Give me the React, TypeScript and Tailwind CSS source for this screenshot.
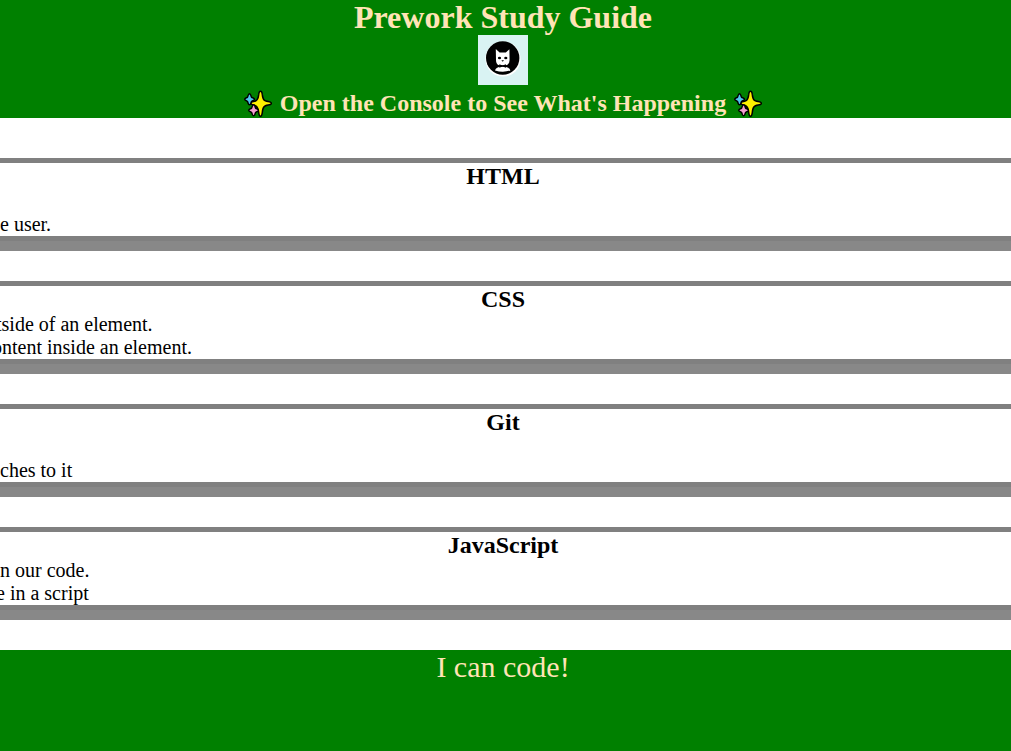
import React from "react";

function Sparkles() {
  return (
    <svg viewBox="0 0 28 28" className="size-7 shrink-0" aria-hidden="true" stroke="#000" strokeWidth="3" strokeLinejoin="round" paintOrder="stroke">
      <path fill="#fff100" d="M16.5 2C17 2 17.4 3 17.6 5C18.2 9.8 19.4 11.6 24 12.3C26 12.6 26.6 12.8 26.6 13.3C26.6 13.8 26 14 24 14.3C19.4 15 18.2 17.2 17.6 22C17.4 24 17 25.4 16.5 25.4C16 25.4 15.6 24 15.4 22C14.8 17.2 13.4 15 9.6 14.3C8 14 7.6 13.8 7.6 13.3C7.6 12.8 8 12.6 9.6 12.3C13.4 11.6 14.8 9.8 15.4 5C15.6 3 16 2 16.5 2Z" />
      <path fill="#50c8f0" d="M5.5 4.6C6.2 4.6 6.3 7 7 7.7C7.6 8.4 9.7 8.6 9.7 9.3C9.7 10 7.6 10.2 7 10.9C6.3 11.6 6.2 14 5.5 14C4.8 14 4.7 11.6 4 10.9C3.4 10.2 1.5 10 1.5 9.3C1.5 8.6 3.4 8.4 4 7.7C4.7 7 4.8 4.6 5.5 4.6Z" />
      <path fill="#f4a0d0" d="M9.6 15.6C10.3 15.6 10.4 18 11.1 18.7C11.7 19.4 13.7 19.6 13.7 20.3C13.7 21 11.7 21.2 11.1 21.9C10.4 22.6 10.3 24.9 9.6 24.9C8.9 24.9 8.8 22.6 8.1 21.9C7.5 21.2 5.5 21 5.5 20.3C5.5 19.6 7.5 19.4 8.1 18.7C8.8 18 8.9 15.6 9.6 15.6Z" />
    </svg>
  );
}

function CatLogo() {
  return (
    <svg viewBox="0 0 50 50" className="size-[50px]" role="img" aria-label="Cat logo">
      <rect width="50" height="50" fill="#d9f3f3" />
      <circle cx="25" cy="24" r="17.6" fill="#fff" />
      <circle cx="24.7" cy="23" r="16.7" fill="#000" />
      <path fill="#fff" d="M17.8 14L21.6 17.4H27.8L31.4 14.2L31.6 25Q31.4 29.6 28 30.2H21.2Q18 29.6 18 25Z" />
      <path fill="#fff" d="M17 35.4Q18 32.4 22 31.8H27.4Q31.4 32.4 32.4 35.4Q25 38 17 35.4Z" />
      <ellipse cx="21.5" cy="23" rx="1.6" ry="1.2" />
      <ellipse cx="27.8" cy="23" rx="1.6" ry="1.2" />
      <path d="M23.4 25.2H26L24.7 26.8Z" />
      <path d="M21.3 29.2L24.6 30.5L28 29.2V32.7L24.6 31.4L21.3 32.7Z" />
    </svg>
  );
}

const topics = [
  { title: "HTML", notes: [{ text: "", shift: "" }, { text: "e user.", shift: "" }] },
  {
    title: "CSS",
    notes: [
      { text: "tside of an element.", shift: "-ml-1" },
      { text: "ontent inside an element.", shift: "-ml-2" },
    ],
  },
  { title: "Git", notes: [{ text: "", shift: "" }, { text: "ches to it", shift: "" }] },
  {
    title: "JavaScript",
    notes: [
      { text: "n our code.", shift: "" },
      { text: "e in a script", shift: "-ml-1" },
    ],
  },
];

export default function App() {
  return (
    <div className="flex min-h-screen flex-col overflow-x-hidden bg-white font-['Liberation_Serif',serif] text-black">
      <header className="flex flex-col items-center bg-[#008000] pr-[5px] text-center text-[#ffe4b5]">
        <h1 className="text-[32px] leading-[35px] font-bold">Prework Study Guide</h1>
        <CatLogo />
        <h2 className="mt-1 flex items-center gap-2 text-2xl leading-[29px] font-bold">
          <Sparkles />
          Open the Console to See What's Happening
          <Sparkles />
        </h2>
      </header>
      <main className="flex flex-col gap-10 py-10">
        {topics.map((topic) => (
          <section key={topic.title} className="border-y-5 border-[#808080] shadow-[0_10px_0_#888888]">
            <h2 className="pr-[5px] text-center text-2xl leading-[27px] font-bold">{topic.title}</h2>
            <ul className="text-xl leading-[23px]">
              {topic.notes.map((note, i) => (
                <li key={i} className={`min-h-[23px] ${note.shift}`}>
                  {note.text}
                </li>
              ))}
            </ul>
          </section>
        ))}
      </main>
      <footer className="grow bg-[#008000] pr-[5px] text-center text-3xl leading-[34px] text-[#ffe4b5]">I can code!</footer>
    </div>
  );
}
